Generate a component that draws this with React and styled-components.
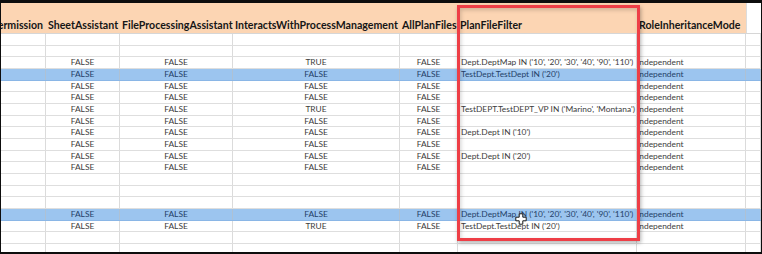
import React from "react";
import styled, { createGlobalStyle } from "styled-components";

const GlobalStyle = createGlobalStyle`
  html, body { margin: 0; padding: 0; background: #111; }
  * { box-sizing: border-box; }
`;

const COLS = "45px 74px 113px 167px 58px 179px 109px 1fr";
const FONT = `Lato, "Open Sans", "Liberation Sans", sans-serif`;

const Frame = styled.div`
  width: 762px;
  height: 254px;
  background: #0d0d0d;
  padding: 3px 1px 2px 1px;
  overflow: hidden;
`;

const Sheet = styled.div`
  position: relative;
  height: 100%;
  background: #ffffff;
  overflow: hidden;
  font-family: ${FONT};
`;

const HeaderRow = styled.div`
  display: grid;
  grid-template-columns: ${COLS};
  height: 31px;
  border-bottom: 1px solid #d6d6d6;
`;

const HeadCell = styled.div`
  display: flex;
  align-items: flex-end;
  justify-content: ${(p) => (p.$clip ? "flex-end" : "flex-start")};
  padding: 0 ${(p) => (p.$clip ? "3px" : "0")} 2px 2px;
  background: ${(p) => (p.$blank ? "#ffffff" : "#fcd5b3")};
  border-left: ${(p) => (p.$blank ? "1px solid #dcdcdc" : "none")};
  font-size: 10.6px;
  font-weight: 700;
  color: #161616;
  white-space: nowrap;
  overflow: ${(p) => (p.$clip ? "hidden" : "visible")};
  line-height: 1;
`;

const DataRow = styled.div`
  display: grid;
  grid-template-columns: ${COLS};
  height: 11.667px;
  border-bottom: 1px solid ${(p) => (p.$selected ? "#8ab6e6" : "#dedede")};
  background: ${(p) => (p.$selected ? "#9cc5ef" : "#ffffff")};
  color: ${(p) => (p.$selected ? "#243f68" : "#3c3c3c")};
`;

const Cell = styled.div`
  display: flex;
  align-items: center;
  justify-content: ${(p) => (p.$left ? "flex-start" : "center")};
  padding-left: ${(p) => (p.$left ? p.$pad || "3px" : "0")};
  border-right: 1px solid rgba(190, 190, 190, 0.55);
  font-size: 8.4px;
  white-space: nowrap;
  overflow: visible;
  line-height: 1;
`;

const RedBox = styled.div`
  position: absolute;
  left: 456px;
  top: 2px;
  width: 183px;
  height: 236px;
  border: 3px solid #ee3e46;
  box-shadow: 1px 2px 4px rgba(0, 0, 0, 0.3), inset 1px 2px 4px rgba(0, 0, 0, 0.18);
  pointer-events: none;
`;

const Cursor = styled.svg`
  position: absolute;
  left: 514px;
  top: 210px;
  width: 12px;
  height: 12px;
`;

const headers = [
  "Permission",
  "SheetAssistant",
  "FileProcessingAssistant",
  "InteractsWithProcessManagement",
  "AllPlanFiles",
  "PlanFileFilter",
  "RoleInheritanceMode",
];

const F = "FALSE";
const T = "TRUE";
const IND = "Independent";
const MAP = "Dept.DeptMap IN ('10', '20', '30', '40', '90', '110')";
const TD = "TestDept.TestDept IN ('20')";

const rows = [
  { c: [] },
  { c: [] },
  { c: [F, F, T, F, MAP, IND] },
  { c: [F, F, F, F, TD, IND], sel: true },
  { c: [F, F, F, F, "", IND] },
  { c: [F, F, F, F, "", IND] },
  { c: [F, F, T, F, "TestDEPT.TestDEPT_VP IN ('Marino', 'Montana')", IND] },
  { c: [F, F, F, F, "", IND] },
  { c: [F, F, F, F, "Dept.Dept IN ('10')", IND] },
  { c: [F, F, F, F, "", IND] },
  { c: [F, F, F, F, "Dept.Dept IN ('20')", IND] },
  { c: [F, F, F, F, "", IND] },
  { c: [] },
  { c: [] },
  { c: [] },
  { c: [F, F, F, F, MAP, IND], sel: true },
  { c: [F, F, T, F, TD, IND] },
  { c: [] },
  { c: [] },
];

export default function App() {
  return (
    <>
      <GlobalStyle />
      <Frame>
        <Sheet>
          <HeaderRow>
            {headers.map((h, i) => (
              <HeadCell key={h} $clip={i === 0}>
                {h}
              </HeadCell>
            ))}
            <HeadCell $blank />
          </HeaderRow>
          {rows.map((r, i) => (
            <DataRow key={i} $selected={r.sel}>
              <Cell />
              <Cell>{r.c[0]}</Cell>
              <Cell>{r.c[1]}</Cell>
              <Cell>{r.c[2]}</Cell>
              <Cell>{r.c[3]}</Cell>
              <Cell $left>{r.c[4]}</Cell>
              <Cell $left $pad="0px">{r.c[5]}</Cell>
              <Cell />
            </DataRow>
          ))}
          <RedBox />
          <Cursor viewBox="0 0 12 12">
            <path
              d="M4.2 0.8 H7.8 V4.2 H11.2 V7.8 H7.8 V11.2 H4.2 V7.8 H0.8 V4.2 H4.2 Z"
              fill="#ffffff"
              stroke="#1a1a1a"
              strokeWidth="1"
              strokeLinejoin="miter"
            />
          </Cursor>
        </Sheet>
      </Frame>
    </>
  );
}
